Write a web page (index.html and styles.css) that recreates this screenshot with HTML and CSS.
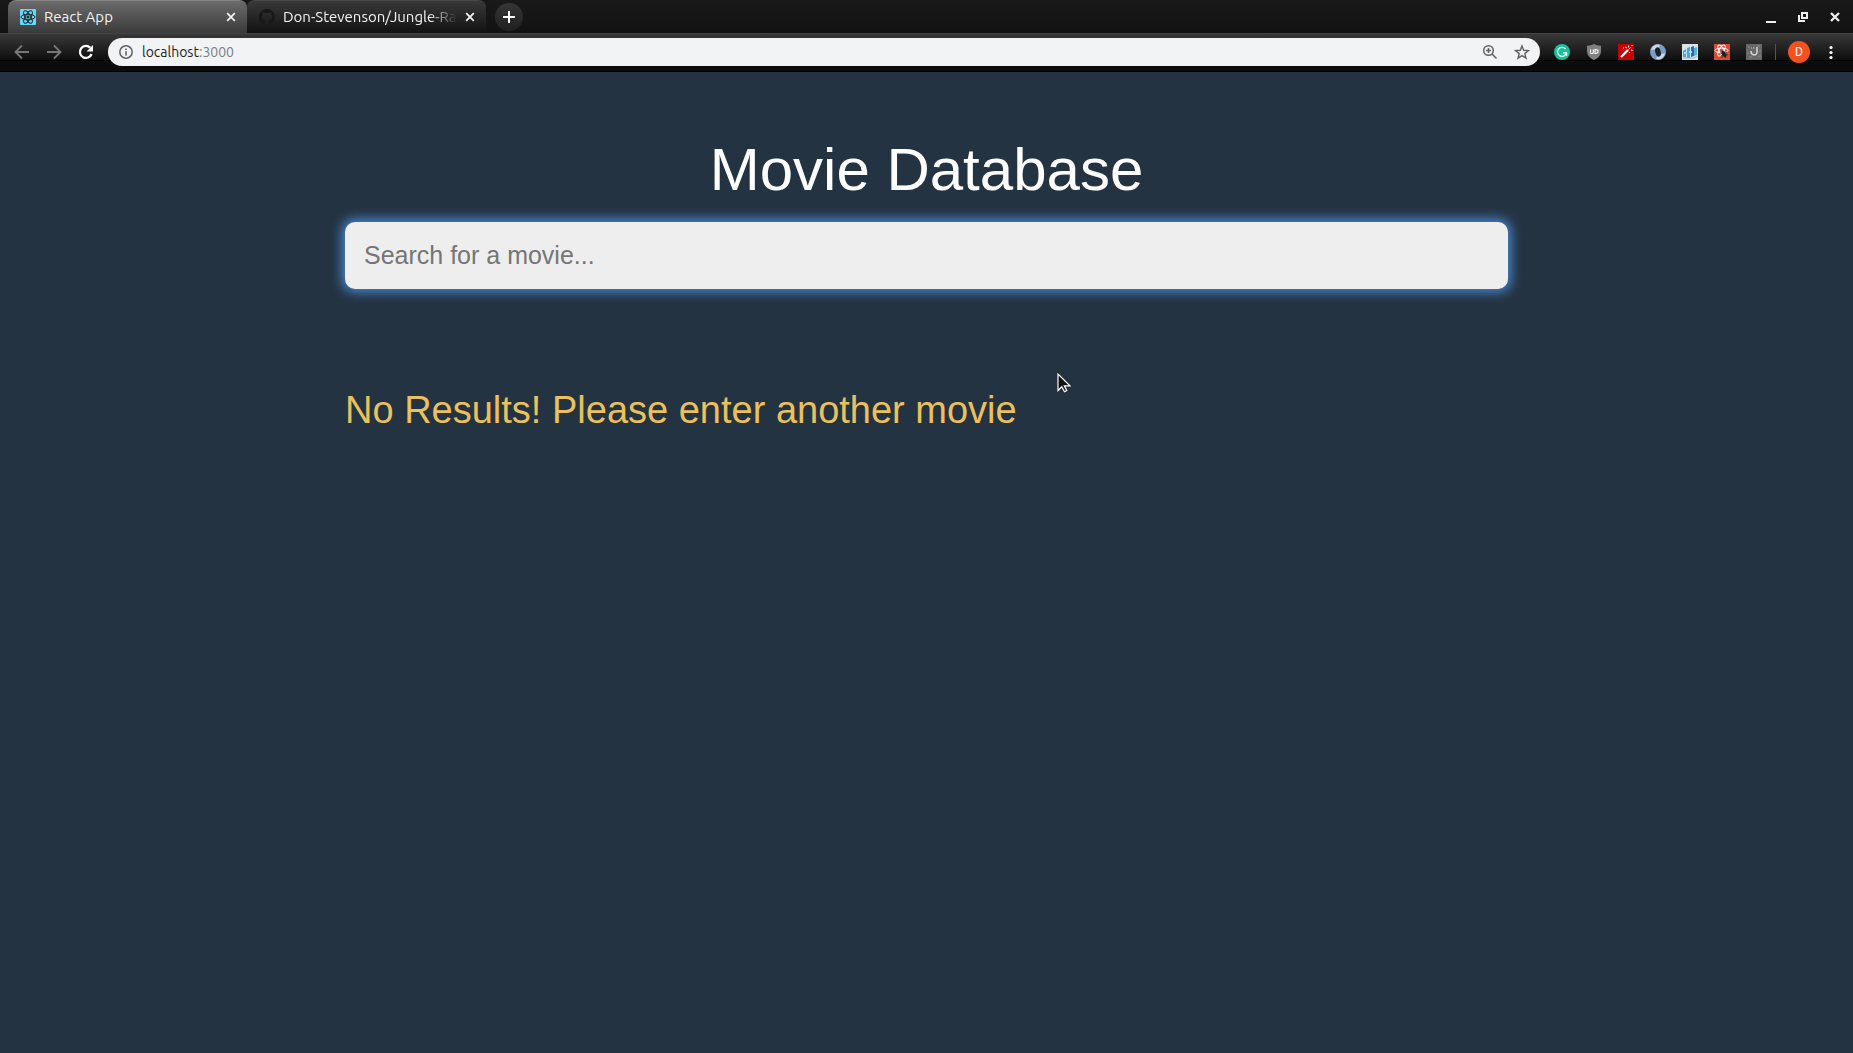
FILE: index.html
```html
<!DOCTYPE html>
<html lang="en">
<head>
<meta charset="utf-8">
<title>React App</title>
<link rel="stylesheet" href="styles.css">
</head>
<body>
<header class="browser">
  <div class="tab-strip">
    <div class="tab tab-active">
      <svg class="icon" viewBox="0 0 16 16"><rect width="16" height="16" rx="1" fill="#61dafb"/><g fill="none" stroke="#222" stroke-width="1"><ellipse cx="8" cy="8" rx="7" ry="2.7"/><ellipse cx="8" cy="8" rx="7" ry="2.7" transform="rotate(60 8 8)"/><ellipse cx="8" cy="8" rx="7" ry="2.7" transform="rotate(120 8 8)"/></g><circle cx="8" cy="8" r="1.4" fill="#222"/></svg>
      <span class="tab-title">React App</span>
      <button class="tab-close" aria-label="Close React App"><svg viewBox="0 0 10 10"><path d="M1.2 1.2l7.6 7.6M8.8 1.2L1.2 8.8" stroke="#f2f2f2" stroke-width="1.8"/></svg></button>
    </div>
    <div class="tab tab-idle">
      <svg class="icon" viewBox="0 0 16 16"><path fill="#181818" d="M8 0C3.6 0 0 3.6 0 8c0 3.5 2.3 6.500 5.500 7.600.4.1.5-.2.5-.4v-1.500c-2.200.5-2.700-.9-2.700-.9-.4-.9-.9-1.200-.9-1.200-.7-.5.1-.5.1-.5.8.1 1.200.8 1.200.8.7 1.200 1.900.9 2.300.7.1-.5.3-.9.5-1.100-1.800-.2-3.600-.9-3.600-4 0-.9.3-1.600.8-2.100-.1-.2-.4-1 .1-2.100 0 0 .7-.2 2.200.8a7.600 7.600 0 0 1 4 0c1.500-1 2.200-.8 2.200-.8.4 1.100.2 1.900.1 2.100.5.6.8 1.300.8 2.100 0 3.100-1.900 3.700-3.700 3.900.3.3.6.8.6 1.500v2.200c0 .2.100.5.600.4A8 8 0 0 0 8 0z"/></svg>
      <span class="tab-title tab-title-fade">Don-Stevenson/Jungle-Rails</span>
      <button class="tab-close" aria-label="Close Don-Stevenson"><svg viewBox="0 0 10 10"><path d="M1.2 1.2l7.6 7.6M8.8 1.2L1.2 8.8" stroke="#f2f2f2" stroke-width="1.8"/></svg></button>
    </div>
    <button class="new-tab" aria-label="New tab"><svg viewBox="0 0 12 12"><path d="M6 0v12M0 6h12" stroke="#fff" stroke-width="2"/></svg></button>
    <div class="window-controls">
      <button class="slot" aria-label="Minimize"><svg class="icon" viewBox="0 0 16 16"><path d="M3 12h10v2H3z" fill="#eee"/></svg></button>
      <button class="slot" aria-label="Restore"><svg class="icon" viewBox="0 0 16 16"><path d="M7 4h5v5H7zM4 6v6h6" fill="none" stroke="#eee" stroke-width="2"/></svg></button>
      <button class="slot" aria-label="Close window"><svg class="icon" viewBox="0 0 16 16"><path d="M4 4l8 8M12 4l-8 8" stroke="#eee" stroke-width="2.300"/></svg></button>
    </div>
  </div>
  <div class="toolbar">
    <button class="slot" aria-label="Back"><svg class="icon" viewBox="0 0 16 16"><path d="M15 8H2M8 1.500L1.500 8 8 14.500" fill="none" stroke="#787878" stroke-width="1.800"/></svg></button>
    <button class="slot" aria-label="Forward"><svg class="icon" viewBox="0 0 16 16"><path d="M1 8h13M8 1.500L14.500 8 8 14.500" fill="none" stroke="#787878" stroke-width="1.800"/></svg></button>
    <button class="slot" aria-label="Reload"><svg class="icon" viewBox="0 0 16 16"><path d="M13.600 10A6 6 0 1 1 12.300 3.800" fill="none" stroke="#fff" stroke-width="2.200"/><path d="M15 1v6.500H8.500z" fill="#fff"/></svg></button>
    <div class="address">
      <svg class="icon" viewBox="0 0 16 16"><circle cx="8" cy="8" r="6.200" fill="none" stroke="#5f6368" stroke-width="1.500"/><path d="M7.200 7.200h1.600v4.300H7.200zM7.200 4.500h1.600V6H7.200z" fill="#5f6368"/></svg>
      <span class="url">localhost<span class="port">:3000</span></span>
      <button class="slot" aria-label="Zoom"><svg class="icon" viewBox="0 0 16 16"><g fill="none" stroke="#5f6368" stroke-width="1.500"><circle cx="6.500" cy="6.500" r="4.800"/><path d="M10 10l4.500 4.500M6.500 4v5M4 6.500h5"/></g></svg></button>
      <button class="slot" aria-label="Bookmark"><svg class="icon" viewBox="0 0 16 16"><path d="M8 2l1.700 4.300 4.700.3-3.600 3 1.200 4.600L8 11.700l-4 2.500 1.200-4.600-3.600-3 4.700-.3z" fill="none" stroke="#5f6368" stroke-width="1.400"/></svg></button>
    </div>
    <div class="extensions">
      <button class="slot" aria-label="Grammar"><svg class="icon" viewBox="0 0 16 16"><circle cx="8" cy="8" r="8" fill="#15c39a"/><path d="M11.500 5A4.500 4.500 0 1 0 12.400 8.800H9M12.500 8.800v3" fill="none" stroke="#fff" stroke-width="1.400"/></svg></button>
      <button class="slot" aria-label="Shield"><svg class="icon" viewBox="0 0 16 16"><path d="M8 0c2 1.200 4.500 1.700 7 1.700V7c0 4.500-3 7-7 9-4-2-7-4.500-7-9V1.700C3.500 1.700 6 1.200 8 0z" fill="#808080"/><path d="M4.500 5.500v3c0 1.500 2.800 1.500 2.800 0v-3M9 5.500v4c4.200.3 4.200-4.500 0-4z" fill="none" stroke="#fff" stroke-width="1.100"/></svg></button>
      <button class="slot" aria-label="Wand"><svg class="icon" viewBox="0 0 16 16"><path d="M0 0h16v16H0z" fill="#c80000"/><path d="M3 13l7-7" stroke="#fff" stroke-width="2.400"/><path d="M10.500 5.500l2-2M7 3l2 1M10.500 1.500v2M13 6l1.500.500M11.500 8v1M13.500 2l1-1M5 4h1" stroke="#fff" stroke-width="1"/></svg></button>
      <button class="slot" aria-label="Ring"><svg class="icon" viewBox="0 0 16 16"><circle cx="8" cy="8" r="8" fill="#7d9cc1"/><path d="M1 6a7 7 0 0 1 9-5L8 5zM15 9a7 7 0 0 1-9 6l2-4z" fill="#cad9e8"/><ellipse cx="8" cy="8" rx="2.700" ry="4.700" fill="#17202b" transform="rotate(-15 8 8)"/></svg></button>
      <button class="slot" aria-label="Blocks"><svg class="icon" viewBox="0 0 16 16"><path d="M0 0h16v16H0z" fill="#d7e4e8"/><path d="M1 7l3-2v8H1zM5 4l3-1v11H5z" fill="#4ba3d8"/><path d="M9 3l3-1v10l-3 1z" fill="#2c68b4"/><path d="M12 4l3-1v8l-3 1z" fill="#5caed0"/><path d="M2 8h3v2H2zM7 7h3v2H7z" fill="#a7dcee"/><path d="M1 14h11l3-2" fill="none" stroke="#94b5c4"/></svg></button>
      <button class="slot" aria-label="React tools"><svg class="icon" viewBox="0 0 16 16"><path d="M0 0h16v16H0z" fill="#d94b38"/><g fill="none" stroke="#fff" stroke-width="1"><ellipse cx="7.500" cy="6.500" rx="6.500" ry="2.400"/><ellipse cx="7.500" cy="6.500" rx="6" ry="2.400" transform="rotate(60 7.500 6.500)"/><ellipse cx="7.500" cy="6.500" rx="6" ry="2.400" transform="rotate(120 7.500 6.500)"/></g><ellipse cx="10" cy="10" rx="2" ry="3.500" fill="#222" transform="rotate(-25 10 10)"/><path d="M6 9l8 2M7 12l6-4M8 14l1-7M12 14l-2-5" stroke="#222" stroke-width=".8"/></svg></button>
      <button class="slot" aria-label="Script"><svg class="icon" viewBox="0 0 16 16"><path d="M0 0h16v16H0z" fill="#686868"/><path d="M2 3h2M11 2h3M1 9h2M12 12h3M3 13h3M13 7h2" stroke="#8b8b8b"/><path d="M5 7c0 5 6 5 6 1V3" fill="none" stroke="#d8d8d8" stroke-width="1.500"/><path d="M7 4h1.500M5 4h1" stroke="#c0c0c0"/></svg></button>
    </div>
    <button class="slot" aria-label="Profile"><span class="avatar">D</span></button>
    <button class="slot" aria-label="Menu"><svg class="icon" viewBox="0 0 16 16"><g fill="#fff"><circle cx="8" cy="3.500" r="1.600"/><circle cx="8" cy="8.500" r="1.600"/><circle cx="8" cy="13.500" r="1.600"/></g></svg></button>
  </div>
</header>
<main class="page">
  <h1 class="title">Movie Database</h1>
  <input class="search" type="text" placeholder="Search for a movie..." aria-label="Search for a movie">
  <p class="message">No Results! Please enter another movie</p>
</main>
<svg class="cursor" viewBox="0 0 14 20"><path d="M1 1v16.500l3.800-3.700 2.700 5 2.300-1.200-2.500-4.800H13z" fill="#111" stroke="#fff" stroke-width="1.200"/></svg>
</body>
</html>
```
FILE: styles.css
```css
* {
  box-sizing: border-box;
}

body {
  margin: 0;
  min-height: 100vh;
  background: #243342;
  font-family: "Liberation Sans", Arial, sans-serif;
}

button {
  padding: 0;
  border: 0;
  background: none;
  font: inherit;
}

.browser {
  font-family: Ubuntu, "Noto Sans", sans-serif;
  font-size: 14px;
  background: #141414;
}

.icon {
  display: block;
  flex: none;
  width: 16px;
  height: 16px;
}

.slot {
  display: flex;
  flex: none;
  align-items: center;
  justify-content: center;
  width: 32px;
  height: 28px;
}

.tab-strip {
  display: flex;
  align-items: center;
  height: 33px;
  padding: 0 2px 0 8px;
  background: linear-gradient(#191919, #121212);
}

.tab {
  display: flex;
  align-items: center;
  width: 239px;
  height: 33px;
  padding: 0 11px 0 12px;
  color: #f4f4f4;
}

.tab-active {
  border-radius: 8px 8px 0 0;
  border-top: 1px solid #858585;
  background: linear-gradient(#6b6b6b, #3b3b3b);
}

.tab-idle {
  border-radius: 8px 8px 0 8px;
  border-top: 1px solid #484848;
  background: linear-gradient(#393939, #121212);
}

.tab-title {
  flex: 1;
  margin: 0 8px;
  overflow: hidden;
  font-size: 15px;
  line-height: 20px;
  white-space: nowrap;
}

.tab-title-fade {
  -webkit-mask-image: linear-gradient(to right, #000 84%, transparent);
  mask-image: linear-gradient(to right, #000 84%, transparent);
}

.tab-close {
  width: 10px;
  height: 10px;
}

.tab-close svg,
.new-tab svg {
  display: block;
}

.new-tab {
  display: flex;
  align-items: center;
  justify-content: center;
  width: 28px;
  height: 28px;
  margin-left: 9px;
  border-radius: 50%;
  background: linear-gradient(#363636, #202020);
}

.new-tab svg {
  width: 12px;
  height: 12px;
}

.window-controls {
  display: flex;
  margin-left: auto;
}

.toolbar {
  display: flex;
  align-items: center;
  height: 39px;
  padding: 0 6px 2px;
  border-top: 1px solid #444;
  border-bottom: 1px solid #000;
  background: linear-gradient(#383838, #0e0e0e 26px, #000 26px, #000 27px, #0c0c0c 27px);
}

.address {
  display: flex;
  flex: 1;
  align-items: center;
  height: 28px;
  margin: 0 6px;
  padding: 0 2px 0 10px;
  border-radius: 14px;
  background: #f1f3f4;
}

.url {
  flex: 1;
  margin-left: 8px;
  color: #202124;
}

.port {
  color: #7b7f83;
}

.extensions {
  display: flex;
  margin-right: 7px;
  padding-right: 6px;
  background: linear-gradient(#555, #555) right center / 1px 16px no-repeat;
}

.avatar {
  width: 22px;
  height: 22px;
  border-radius: 50%;
  background: #f4511e;
  color: #fff;
  font-family: Roboto, sans-serif;
  font-size: 12px;
  line-height: 22px;
}

.page {
  max-width: 1163px;
  margin: 0 auto;
  padding-top: 64px;
}

.title {
  margin: 0 0 18px;
  color: #fff;
  font-size: 60px;
  font-weight: 400;
  line-height: 68px;
  text-align: center;
}

.search {
  display: block;
  width: 100%;
  height: 67px;
  padding: 0 19px;
  border: 0;
  border-radius: 10px;
  outline: 0;
  background: #eee;
  box-shadow: 0 0 12px 3px #4a8ad4;
  color: #333;
  font-family: inherit;
  font-size: 25px;
}

.search::placeholder {
  color: #757575;
}

.message {
  margin: 100px 0 0;
  color: #eac15c;
  font-size: 38px;
  line-height: 42px;
}

.cursor {
  position: absolute;
  top: 373px;
  left: 1057px;
  width: 14px;
  height: 20px;
}
```
